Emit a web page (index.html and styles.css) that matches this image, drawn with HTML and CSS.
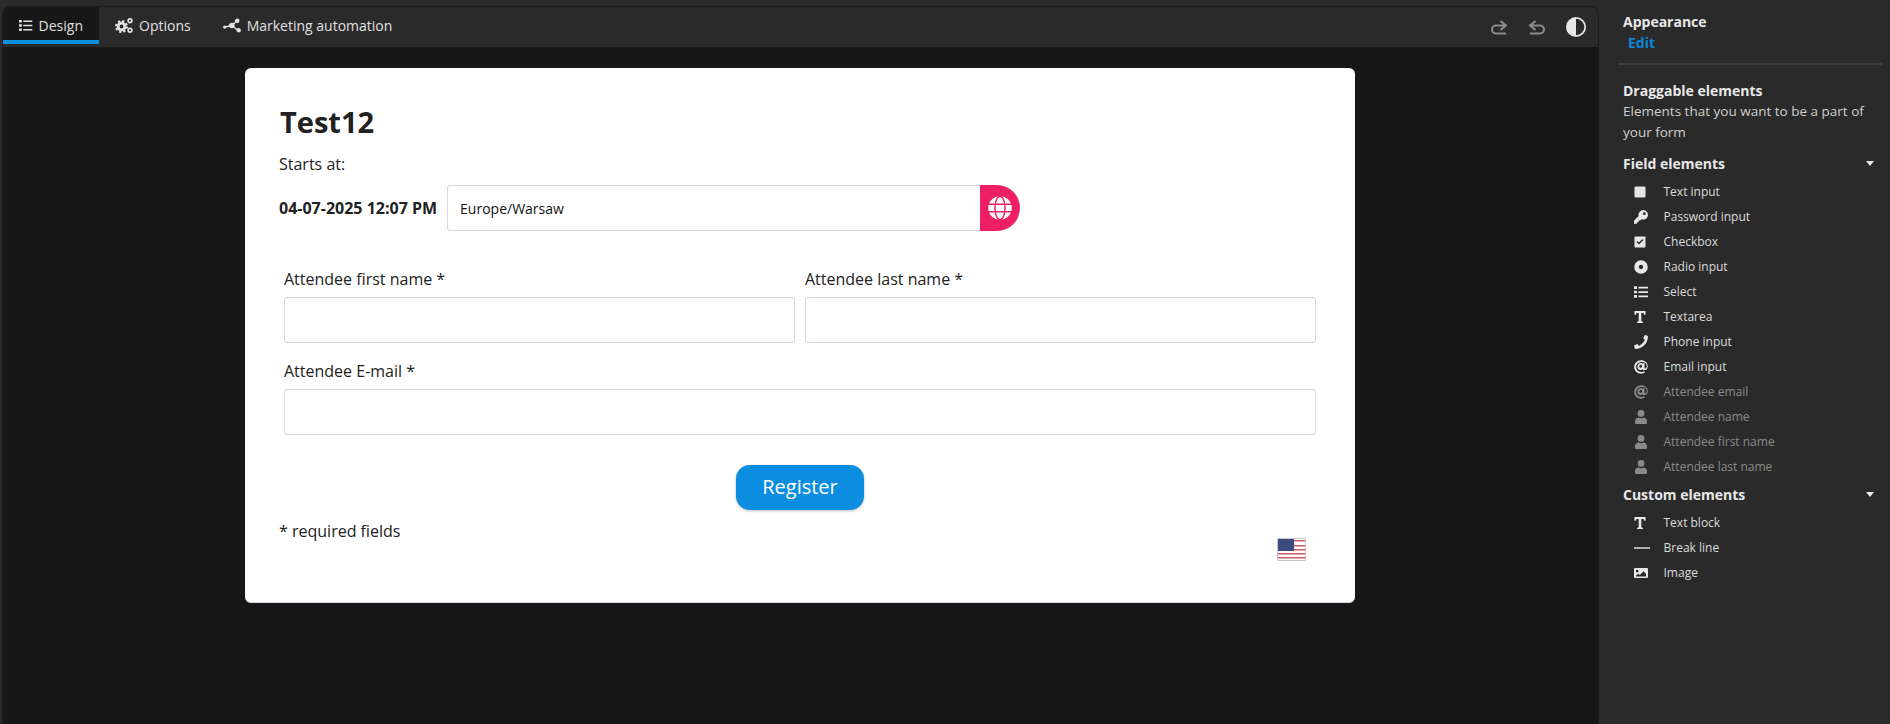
FILE: index.html
```html
<!DOCTYPE html>
<html lang="en">
<head>
    <meta charset="UTF-8">
    <meta name="viewport" content="width=device-width, initial-scale=1.0">
    <title>Form designer</title>
    <link rel="stylesheet" href="styles.css">
</head>
<body>
    <svg class="sprite" width="0" height="0">
        <symbol id="i-list" viewBox="0 0 16 16"><path d="M0 1.5h3.4v3H0zM0 6.5h3.4v3H0zM0 11.5h3.4v3H0zM5 2h11v2H5zM5 7h11v2H5zM5 12h11v2H5z"/></symbol>
        <symbol id="i-cogs" viewBox="0 0 18 15"><g fill="none" stroke="#e0e0e0"><circle cx="6.500" cy="8.500" r="3.400" stroke-width="3"/><circle cx="6.500" cy="8.500" r="5.500" stroke-width="2" stroke-dasharray="2.200 2.120"/></g><path fill-rule="evenodd" d="M15 0a2.700 2.700 0 1 1 0 5.400A2.700 2.700 0 0 1 15 0zm0 1.700a1 1 0 1 0 0 2 1 1 0 0 0 0-2zM15 9.600a2.700 2.700 0 1 1 0 5.400 2.700 2.700 0 0 1 0-5.400zm0 1.700a1 1 0 1 0 0 2 1 1 0 0 0 0-2z"/></symbol>
        <symbol id="i-nodes" viewBox="0 0 18 14"><path d="M2 8.500l7-1.500M9 7l5-5M9 7l6 5" stroke="#e0e0e0" stroke-width="1.400" fill="none"/><circle cx="1.700" cy="8.600" r="1.700"/><circle cx="8.800" cy="7" r="2.800"/><circle cx="14.300" cy="2.200" r="2.200"/><circle cx="15.700" cy="11.800" r="2.200"/></symbol>
        <symbol id="i-square" viewBox="0 -1 14 14"><rect x=".5" y=".5" width="11" height="11" rx="1"/></symbol>
        <symbol id="i-key" viewBox="0 0 14 14"><path fill-rule="evenodd" d="M9.200 0a4.800 4.800 0 1 1-1.700 9.300L6.200 10.600H4.700v1.500H3.200V13.600L.6 14 0 13.400v-2.600l4.700-4.700A4.800 4.800 0 0 1 9.200 0zm1.100 2.300a1.400 1.400 0 1 0 0 2.800 1.400 1.400 0 0 0 0-2.800z"/></symbol>
        <symbol id="i-check" viewBox="0 -1 14 14"><path fill-rule="evenodd" d="M1.200 .5h9.600a.7.700 0 0 1 .7.7v9.600a.7.700 0 0 1-.7.700H1.200a.7.700 0 0 1-.7-.7V1.200a.7.700 0 0 1 .7-.7zm1.200 5.400l2.500 2.700 4.700-4.700-1-1-3.700 3.600-1.500-1.600z"/></symbol>
        <symbol id="i-radio" viewBox="0 0 13 13"><path fill-rule="evenodd" d="M6.500 .2a6.300 6.300 0 1 1 0 12.600 6.300 6.300 0 0 1 0-12.600zm0 4.300a2 2 0 1 0 0 4 2 2 0 0 0 0-4z"/></symbol>
        <symbol id="i-t" viewBox="0 -1 14 14"><path d="M.5 0h11v3.800h-1.300L9.600 2H7.300v8.300l1.600.4V12H3.100v-1.300l1.600-.4V2H2.400l-.6 1.800H.5z"/></symbol>
        <symbol id="i-phone" viewBox="0 0 13 13"><path d="M12.600.6L9.900 0 8.500 3.100l1.600 1.400C9.200 6.800 7 9 4.600 10.100L3.200 8.400 0 9.800l.7 2.800.6.400C7.800 13 13 7.800 13 1.200z"/></symbol>
        <symbol id="i-at" viewBox="0 0 13 13"><path fill-rule="evenodd" d="M6.600.2c3.500 0 6.200 2.200 6.200 5.500 0 2.200-1.300 3.700-3.200 3.700-.8 0-1.400-.3-1.700-.9-.5.500-1.100.8-1.900.8-1.700 0-2.800-1.300-2.800-3 0-2 1.500-3.500 3.300-3.500.7 0 1.200.2 1.600.6V3h1.700v3.900c0 .6.200.9.700.9.800 0 1.400-.9 1.400-2.200 0-2.300-1.900-3.800-4.300-3.800C3.900 1.800 2 3.900 2 6.500c0 2.700 2 4.600 4.700 4.600 1 0 1.900-.2 2.800-.7l.7 1.300c-1.100.7-2.300 1-3.600 1C2.900 12.700.2 10.200.2 6.500.2 3 3 .2 6.600.2zm-.3 4.300c-.8 0-1.400.7-1.400 1.500 0 .8.500 1.300 1.200 1.300.8 0 1.400-.7 1.400-1.500 0-.8-.500-1.300-1.200-1.300z"/></symbol>
        <symbol id="i-user" viewBox="0 0 12 14"><circle cx="6" cy="3.400" r="3.400"/><path d="M3.200 7.600c1.700.8 3.900.8 5.600 0C10.700 7.800 12 9.300 12 11.200v1.500c0 .7-.5 1.300-1.200 1.300H1.200C.5 14 0 13.400 0 12.700v-1.500C0 9.300 1.300 7.800 3.200 7.600z"/></symbol>
        <symbol id="i-image" viewBox="0 0 14 12"><path fill-rule="evenodd" d="M1 1h12a1 1 0 0 1 1 1v8a1 1 0 0 1-1 1H1a1 1 0 0 1-1-1V2a1 1 0 0 1 1-1zm2.200 1.800a1.300 1.300 0 1 0 0 2.600 1.300 1.300 0 0 0 0-2.600zM2 9.500h10V6.800L9.500 4.300 5.800 8 4.500 6.700 2 8.500z"/></symbol>
    </svg>

    <div class="app">
        <main class="editor">
            <div class="toolbar">
                <nav class="tabs">
                    <a class="tab active"><svg class="tab-icon small"><use href="#i-list"/></svg>Design</a>
                    <a class="tab"><svg class="tab-icon"><use href="#i-cogs"/></svg>Options</a>
                    <a class="tab"><svg class="tab-icon"><use href="#i-nodes"/></svg>Marketing automation</a>
                </nav>
                <div class="tools">
                    <svg class="tool" viewBox="0 0 18 15"><path d="M10.500 1l5.500 4.500-5.500 4.500M16 5.500H6a4 4 0 0 0 0 8h10"/></svg>
                    <svg class="tool" viewBox="0 0 18 15"><path d="M7.500 1L2 5.500 7.500 10M2 5.500h10a4 4 0 0 1 0 8H2"/></svg>
                    <svg class="contrast" viewBox="0 0 20 20"><circle cx="10" cy="10" r="10" fill="#e8e8e8"/><path d="M10 1.700a8.300 8.300 0 0 1 0 16.600z" fill="#2a2a2a"/></svg>
                </div>
            </div>

            <div class="canvas">
                <section class="card">
                    <h1>Test12</h1>
                    <p class="starts">Starts at:</p>
                    <div class="date-row">
                        <strong>04-07-2025 12:07 PM</strong>
                        <div class="tz-box">Europe/Warsaw</div>
                        <span class="tz-btn">
                            <svg viewBox="0 0 20 20"><circle cx="10" cy="10" r="9.800" fill="#fff"/><g fill="none" stroke="#ed2064" stroke-width="1.200"><ellipse cx="10" cy="10" rx="4.200" ry="9.800"/><path d="M0 6.800h20M0 13.200h20"/></g></svg>
                        </span>
                    </div>

                    <div class="fields">
                        <label class="field">
                            <span>Attendee first name *</span>
                            <input type="text">
                        </label>
                        <label class="field">
                            <span>Attendee last name *</span>
                            <input type="text">
                        </label>
                        <label class="field wide">
                            <span>Attendee E-mail *</span>
                            <input type="text">
                        </label>
                    </div>

                    <div class="submit-row"><button class="register">Register</button></div>

                    <div class="card-foot">
                        <span>* required fields</span>
                        <svg class="flag" viewBox="0 0 29 23">
                            <rect width="29" height="23" fill="#fff"/>
                            <path d="M0 2h29v1.500H0zM0 7h29v1.500H0zM0 11h29v1.500H0zM0 15h29v1.500H0zM0 19h29v1.500H0z" fill="#cf5a68"/>
                            <rect x="1" y="1" width="16" height="12" fill="#3c4a7e"/>
                            <rect x=".5" y=".5" width="28" height="22" fill="none" stroke="#c8c8c8"/>
                        </svg>
                    </div>
                </section>
            </div>
        </main>

        <aside class="sidebar">
            <div class="appearance">
                <h4>Appearance</h4>
                <a class="edit">Edit</a>
            </div>
            <hr>
            <h4>Draggable elements</h4>
            <p class="desc">Elements that you want to be a part of your form</p>

            <div class="group-head"><h4>Field elements</h4><i class="caret"></i></div>
            <ul class="items">
                <li><svg><use href="#i-square"/></svg>Text input</li>
                <li><svg><use href="#i-key"/></svg>Password input</li>
                <li><svg><use href="#i-check"/></svg>Checkbox</li>
                <li><svg><use href="#i-radio"/></svg>Radio input</li>
                <li><svg><use href="#i-list"/></svg>Select</li>
                <li><svg><use href="#i-t"/></svg>Textarea</li>
                <li><svg><use href="#i-phone"/></svg>Phone input</li>
                <li><svg><use href="#i-at"/></svg>Email input</li>
                <li class="off"><svg><use href="#i-at"/></svg>Attendee email</li>
                <li class="off"><svg><use href="#i-user"/></svg>Attendee name</li>
                <li class="off"><svg><use href="#i-user"/></svg>Attendee first name</li>
                <li class="off"><svg><use href="#i-user"/></svg>Attendee last name</li>
            </ul>

            <div class="group-head custom"><h4>Custom elements</h4><i class="caret"></i></div>
            <ul class="items">
                <li><svg><use href="#i-t"/></svg>Text block</li>
                <li><svg class="line" viewBox="0 0 16 12"><path d="M0 5.300h16v1.400H0z"/></svg>Break line</li>
                <li><svg><use href="#i-image"/></svg>Image</li>
            </ul>
        </aside>
    </div>
</body>
</html>
```

FILE: styles.css
```css
* {
    box-sizing: border-box;
}
html, body {
    height: 100%;
}
body {
    margin: 0;
    background: #2a2a2a;
    color: #e8e8e8;
    font-family: "Open Sans", sans-serif;
    font-size: 14px;
    overflow: hidden;
}
.sprite {
    position: absolute;
}
.app {
    display: flex;
    height: 724px;
    padding-top: 6px;
}

/* left side */
.editor {
    width: 1597px;
    margin-left: 2px;
    display: flex;
    flex-direction: column;
    background: #171717;
    border: 1px solid #1c1c1c;
    border-bottom: 0;
    border-radius: 8px 8px 0 0;
    overflow: hidden;
}
.toolbar {
    height: 40px;
    flex: none;
    display: flex;
    justify-content: space-between;
    background: #2a2a2a;
}
.tabs {
    display: flex;
}
.tab {
    display: flex;
    align-items: center;
    height: 37px;
    padding: 0 16px;
    color: #e0e0e0;
    font-size: 14px;
    white-space: nowrap;
}
.tab.active {
    width: 96px;
    background: #171717;
    border-bottom: 4px solid #0b8de0;
    padding-top: 3px;
}
.tab-icon {
    width: 18px;
    height: 15px;
    margin-right: 6px;
    fill: #e0e0e0;
}
.tab-icon.small {
    width: 15px;
}
.tools {
    display: flex;
    align-items: center;
    gap: 20px;
    padding-right: 12px;
}
.tool {
    width: 18px;
    height: 15px;
    fill: none;
    stroke: #8c8c8c;
    stroke-width: 2;
}
.contrast {
    width: 20px;
    height: 20px;
}
.canvas {
    flex: 1;
    padding: 21px 0 0 242px;
}

/* form card */
.card {
    width: 1110px;
    height: 535px;
    padding: 36px 34px 0;
    background: #fff;
    color: #212121;
    border-radius: 6px;
    border-bottom: 1px solid #d6dbe8;
}
.card h1 {
    margin: 0 0 0 1px;
    font-size: 29px;
    line-height: 36px;
    font-weight: 700;
}
.starts {
    margin: 12px 0 0;
    font-size: 16px;
    line-height: 24px;
}
.date-row {
    display: flex;
    align-items: center;
    margin-top: 9px;
    height: 46px;
}
.date-row strong {
    font-size: 16px;
    margin-right: 10px;
    white-space: nowrap;
}
.tz-box {
    width: 533px;
    height: 46px;
    line-height: 46px;
    padding-left: 12px;
    color: #111;
    font-size: 14px;
    border: 1px solid #d6d8e6;
    border-right: 0;
    border-radius: 3px 0 0 3px;
}
.tz-btn {
    width: 40px;
    height: 46px;
    display: flex;
    align-items: center;
    justify-content: center;
    background: #ed2064;
    border-radius: 0 23px 23px 0;
}
.tz-btn svg {
    width: 24px;
    height: 24px;
}
.fields {
    display: grid;
    grid-template-columns: 511px 511px;
    gap: 16px 10px;
    margin: 36px 0 0 5px;
}
.field {
    display: block;
}
.field span {
    display: block;
    font-size: 16px;
    line-height: 24px;
    color: #222;
    margin-bottom: 6px;
}
.field.wide {
    grid-column: 1 / 3;
}
.field input {
    display: block;
    width: 100%;
    height: 46px;
    border: 1px solid #d6d8e6;
    border-radius: 3px;
    background: #fff;
}
.submit-row {
    margin-top: 30px;
    padding-left: 457px;
}
.register {
    display: block;
    width: 128px;
    height: 45px;
    padding: 0 0 2px;
    border: 0;
    border-radius: 14px;
    background: #0b8de0;
    color: #fff;
    font-family: "Open Sans", sans-serif;
    font-size: 20px;
    box-shadow: 0 1px 3px rgba(0, 0, 0, 0.25);
}
.card-foot {
    display: flex;
    justify-content: space-between;
    align-items: flex-start;
    margin-top: 9px;
    font-size: 16px;
    line-height: 24px;
    padding-right: 15px;
}
.flag {
    width: 29px;
    height: 23px;
    margin-top: 19px;
}

/* right side */
.sidebar {
    width: 282px;
    margin-left: 1px;
    padding: 5px 8px 0 23px;
    font-size: 14px;
}
.sidebar h4 {
    margin: 0;
    font-size: 14px;
    line-height: 21px;
    font-weight: 700;
    color: #e8e8e8;
}
.appearance {
    height: 44px;
}
.edit {
    display: block;
    margin-left: 5px;
    color: #0b86d8;
    font-weight: 700;
    line-height: 21px;
}
.sidebar hr {
    height: 2px;
    margin: 8px -8px 15px -5px;
    border: 0;
    background: #3f3f3f;
}
.desc {
    margin: 0;
    font-size: 13.5px;
    line-height: 21px;
    color: #cfcfcf;
}
.group-head {
    display: flex;
    justify-content: space-between;
    align-items: center;
    margin-top: 10px;
    height: 21px;
}
.group-head.custom {
    margin-top: 5px;
}
.caret {
    width: 0;
    height: 0;
    border-left: 4px solid transparent;
    border-right: 4px solid transparent;
    border-top: 5px solid #e8e8e8;
}
.items {
    list-style: none;
    margin: 0;
    padding: 5px 0 0 11px;
}
.items li {
    display: flex;
    align-items: center;
    height: 25px;
    font-size: 12px;
    color: #dcdcdc;
}
.items li svg {
    width: 14px;
    height: 14px;
    margin-right: 15.500px;
    flex: none;
    fill: #e8e8e8;
}
.items li svg.line {
    width: 16px;
    margin-right: 13.500px;
}
.items li.off {
    color: #8a8a8a;
}
.items li.off svg {
    fill: #8a8a8a;
}
```
